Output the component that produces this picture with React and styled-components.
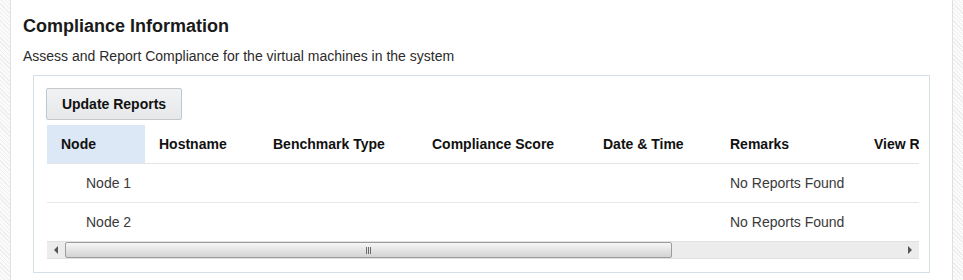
import React from 'react';
import styled, { createGlobalStyle } from 'styled-components';

const GlobalStyle = createGlobalStyle`
  html, body {
    margin: 0;
    padding: 0;
    background: #ffffff;
  }
  body {
    font-family: "Liberation Sans", Arial, sans-serif;
  }
`;

const hatch = `
  background-color: #f7f7f7;
  background-image: repeating-linear-gradient(
    45deg,
    #eeeeee 0px,
    #eeeeee 1px,
    #fbfbfb 1px,
    #fbfbfb 3px
  );
`;

const Page = styled.div`
  display: flex;
  width: 963px;
  height: 280px;
  overflow: hidden;
`;

const Gutter = styled.div`
  width: 10px;
  flex-shrink: 0;
  ${hatch}
  border-${(p) => (p.$side === 'left' ? 'right' : 'left')}: 1px solid #d9e1e9;
`;

const Main = styled.div`
  flex: 1;
  padding: 15px 22px 0 12px;
  min-width: 0;
`;

const Title = styled.h2`
  margin: 0;
  font-size: 18px;
  line-height: 22px;
  font-weight: bold;
  color: #1a1a1a;
`;

const Subtitle = styled.p`
  margin: 11px 0 0;
  font-size: 14px;
  line-height: 16px;
  color: #2b2b2b;
`;

const Panel = styled.div`
  margin: 11px 0 0 10px;
  border: 1px solid #d6dee6;
  padding: 12px 10px 13px 13px;
`;

const Button = styled.button`
  display: block;
  margin-left: -1px;
  width: 136px;
  height: 32px;
  font-family: "Liberation Sans", Arial, sans-serif;
  font-size: 14px;
  font-weight: bold;
  color: #111;
  background: linear-gradient(#f1f2f3, #e6e8ea);
  border: 1px solid #c3c8cd;
  border-radius: 2px;
  cursor: pointer;
`;

const TableWrap = styled.div`
  margin-top: 5px;
  width: 872px;
  overflow: hidden;
`;

const Table = styled.table`
  border-collapse: collapse;
  table-layout: fixed;
  width: 960px;
  font-size: 14px;
`;

const Th = styled.th`
  height: 38px;
  padding: 0 0 0 14px;
  text-align: left;
  font-weight: bold;
  color: #111;
  white-space: nowrap;
  background: ${(p) => (p.$active ? '#dce8f5' : 'transparent')};
  border-bottom: 1px solid #e2e4e6;
`;

const Td = styled.td`
  height: 38px;
  padding: 0 0 0 ${(p) => (p.$indent ? '39px' : '14px')};
  color: #3a3a3a;
  white-space: nowrap;
  border-bottom: ${(p) => (p.$last ? 'none' : '1px solid #e8e8e8')};
`;

const ScrollBar = styled.div`
  display: flex;
  align-items: stretch;
  height: 16px;
  background: #ececec;
  border-top: 1px solid #e2e2e2;
  border-bottom: 1px solid #dde2e6;
`;

const Arrow = styled.div`
  width: 18px;
  flex-shrink: 0;
  display: flex;
  align-items: center;
  justify-content: center;
  &::before {
    content: '';
    width: 0;
    height: 0;
    border-top: 4px solid transparent;
    border-bottom: 4px solid transparent;
    ${(p) =>
      p.$dir === 'left'
        ? 'border-right: 4px solid #555;'
        : 'border-left: 4px solid #555;'}
  }
`;

const Track = styled.div`
  flex: 1;
  display: flex;
`;

const Thumb = styled.div`
  box-sizing: border-box;
  height: 16px;
  border: 1px solid #9c9c9c;
  border-radius: 2px;
  background: linear-gradient(#f6f6f6, #e4e4e4 50%, #d3d3d3);
  display: flex;
  align-items: center;
  justify-content: center;
`;

const Grip = styled.span`
  display: flex;
  gap: 1px;
  & > i {
    display: block;
    width: 1px;
    height: 7px;
    background: #6b6b6b;
  }
`;

const columns = [
  { label: 'Node', width: 98 },
  { label: 'Hostname', width: 114 },
  { label: 'Benchmark Type', width: 159 },
  { label: 'Compliance Score', width: 171 },
  { label: 'Date & Time', width: 127 },
  { label: 'Remarks', width: 144 },
  { label: 'View Reports', width: 147 },
];

const rows = [
  { node: 'Node 1', remarks: 'No Reports Found' },
  { node: 'Node 2', remarks: 'No Reports Found' },
];

export default function App() {
  return (
    <Page>
      <GlobalStyle />
      <Gutter $side="left" />
      <Main>
        <Title>Compliance Information</Title>
        <Subtitle>Assess and Report Compliance for the virtual machines in the system</Subtitle>
        <Panel>
          <Button>Update Reports</Button>
          <TableWrap>
            <Table>
              <colgroup>
                {columns.map((c) => (
                  <col key={c.label} style={{ width: c.width }} />
                ))}
              </colgroup>
              <thead>
                <tr>
                  {columns.map((c, i) => (
                    <Th key={c.label} $active={i === 0}>
                      {c.label}
                    </Th>
                  ))}
                </tr>
              </thead>
              <tbody>
                {rows.map((r, i) => (
                  <tr key={r.node}>
                    <Td $indent $last={i === rows.length - 1}>{r.node}</Td>
                    <Td $last={i === rows.length - 1} />
                    <Td $last={i === rows.length - 1} />
                    <Td $last={i === rows.length - 1} />
                    <Td $last={i === rows.length - 1} />
                    <Td $last={i === rows.length - 1}>{r.remarks}</Td>
                    <Td $last={i === rows.length - 1} />
                  </tr>
                ))}
              </tbody>
            </Table>
            <ScrollBar>
              <Arrow $dir="left" />
              <Track>
                <Thumb style={{ width: 607 }}>
                  <Grip>
                    <i />
                    <i />
                    <i />
                  </Grip>
                </Thumb>
              </Track>
              <Arrow $dir="right" />
            </ScrollBar>
          </TableWrap>
        </Panel>
      </Main>
      <Gutter $side="right" />
    </Page>
  );
}
